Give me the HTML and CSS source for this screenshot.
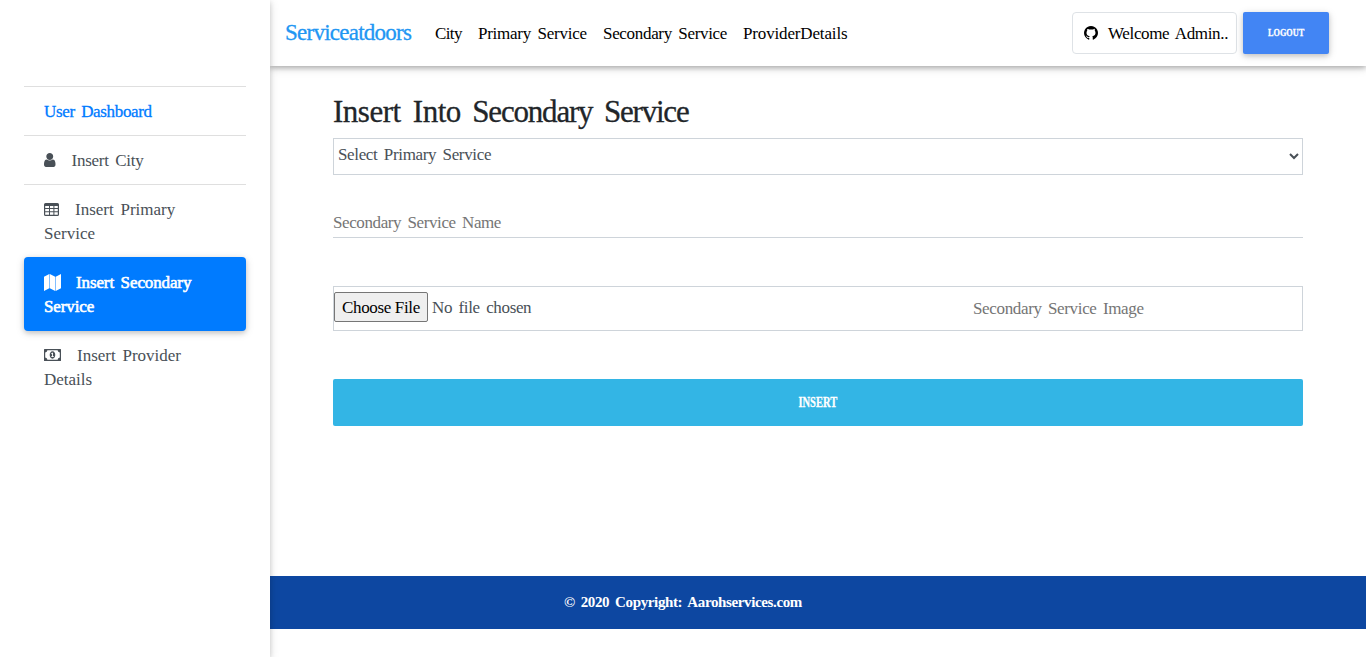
FILE: index.html
```html
<!DOCTYPE html>
<html lang="en">
<head>
<meta charset="utf-8">
<title>Insert Secondary Service</title>
<link rel="stylesheet" href="styles.css">
</head>
<body>
<div class="layout">
  <aside class="sidebar">
    <nav class="menu">
      <a class="item item-title">User Dashboard</a>
      <a class="item item-city"><svg class="icon icon-user" viewBox="256 128 1280 1536"><path d="M1536 1399q0 109-62.5 187t-150.5 78h-854q-88 0-150.5-78t-62.5-187q0-85 8.5-160.5t31.5-152 58.5-131 94-89 134.5-34.5q131 128 313 128t313-128q76 0 134.5 34.5t94 89 58.5 131 31.5 152 8.5 160.5zm-256-887q0 159-112.5 271.5t-271.5 112.5-271.5-112.5-112.5-271.5 112.5-271.5 271.5-112.5 271.5 112.5 112.5 271.5z"/></svg>Insert City</a>
      <a class="item item-primary"><svg class="icon icon-table" viewBox="0 0 15 13"><path fill-rule="evenodd" d="M1.500 0h12A1.500 1.500 0 0 1 15 1.500v10a1.500 1.500 0 0 1-1.500 1.500h-12A1.500 1.500 0 0 1 0 11.500v-10A1.500 1.500 0 0 1 1.500 0zM1.200 3v2H5V3zM6 3v2h3.400V3zM10.400 3v2h3.400V3zM1.200 6v2.200H5V6zM6 6v2.200h3.400V6zM10.400 6v2.200h3.400V6zM1.200 9.200v2.600H5V9.200zM6 9.200v2.600h3.400V9.200zM10.400 9.200v2.600h3.400V9.200z"/></svg>Insert Primary Service</a>
      <a class="item item-active"><svg class="icon icon-map" viewBox="0 0 17.6 16" preserveAspectRatio="none"><path d="M0 2.500 5.500 0v13.500L0 16zM6 0l5.600 2.500V16L6 13.500zM12.100 2.500 17.600 0v13.500L12.100 16z"/></svg>Insert Secondary Service</a>
      <a class="item item-provider"><svg class="icon icon-money" viewBox="0 0 17 12"><path fill-rule="evenodd" d="M.6 0h15.800q.6 0 .6.6v10.800q0 .6-.6.6H.6q-.6 0-.6-.6V.6Q0 0 .6 0zM3.400 1.200Q3.200 3.200 1.200 3.400v5.200Q3.200 8.800 3.400 10.800h10.200q.2-2 2.200-2.200V3.400q-2-.2-2.200-2.200z"/><path fill-rule="evenodd" d="M8.500 2.300c3.700 0 3.700 7.400 0 7.400s-3.700-7.400 0-7.400zM7.100 4.500l.6.700.4-.3v2.300h-.9v.9h2.700v-.9H9V3.700h-.8z"/></svg>Insert Provider Details</a>
    </nav>
  </aside>
  <div class="main">
    <header class="navbar">
      <a class="brand">Serviceatdoors</a>
      <nav class="links"><a class="link-city">City</a><a class="link-primary">Primary Service</a><a class="link-secondary">Secondary Service</a><a class="link-provider">ProviderDetails</a></nav>
      <div class="account">
        <a class="welcome"><svg class="icon-github" viewBox="128 128 1536 1536"><path d="M896 128q209 0 385.500 103t279.500 279.500 103 385.500q0 251-146.500 451.500t-378.500 277.500q-27 5-40-7t-13-30q0-3 .5-76.500t.5-134.500q0-97-52-142 57-6 102.500-18t94-39 81-66.500 53-105 20.500-150.500q0-119-79-206 37-91-8-204-28-9-81 11t-92 44l-38 24q-93-26-192-26t-192 26q-16-11-42.500-27t-83.500-38.500-85-13.500q-45 113-8 204-79 87-79 206 0 85 20.500 150t52.500 105 80.500 67 94 39 102.500 18q-39 36-49 103-21 10-45 15t-57 5-65.500-21.500-55.500-62.500q-19-32-48.500-52t-49.500-24l-20-3q-21 0-29 4.500t-5 11.500 9 14 13 12l7 5q22 10 43.500 38t31.500 51l10 23q13 38 44 61.500t67 30 69.500 7 55.500-3.500l23-4q0 38 .5 88.500t.5 54.500q0 18-13 30t-40 7q-232-77-378.500-277.500t-146.500-451.500q0-209 103-385.500t279.500-279.500 385.500-103z"/></svg>Welcome Admin..</a>
        <button class="logout"><span>LOGOUT</span></button>
      </div>
    </header>
    <form class="form">
      <h2><span class="lead">Insert Into</span> Secondary Service</h2>
      <select class="primary"><option>Select Primary Service</option></select>
      <input class="name" type="text" placeholder="Secondary Service Name">
      <div class="upload"><input type="file"><label>Secondary Service Image</label></div>
      <button class="submit" type="button"><span>INSERT</span></button>
    </form>
    <footer class="footer">© 2020 Copyright: Aarohservices.com</footer>
  </div>
</div>
</body>
</html>
```
FILE: styles.css
```css
* { box-sizing: border-box; }
body { margin: 0; height: 657px; overflow: hidden; background: #fff; }
body, input, select, button {
  font-family: "Liberation Serif", "Times New Roman", serif;
  font-size: 17px;
  line-height: 24px;
  letter-spacing: -0.35px;
  word-spacing: 2.5px;
}
.layout { display: flex; height: 657px; }

.sidebar {
  flex: 0 0 270px;
  padding: 86px 24px 0;
  background: #fff;
  box-shadow: 0 2px 5px rgba(0,0,0,.16), 0 2px 10px rgba(0,0,0,.12);
  z-index: 2;
}
.menu { display: flex; flex-direction: column; }
.item {
  padding: 13px 20px 11px;
  color: #495057;
  border-bottom: 1px solid #dfdfdf;
}
.item-title { color: #007bff; border-top: 1px solid #dfdfdf; letter-spacing: -.34px; -webkit-text-stroke: .3px #007bff; }
.item-city { letter-spacing: -.25px; }
.item-primary { border-bottom: 0; padding-right: 50px; letter-spacing: 0; }
.item-active {
  padding: 14px 20px 12px;
  color: #fff;
  background: #007bff;
  border-radius: 4px;
  border: 0;
  box-shadow: 0 2px 5px rgba(0,0,0,.16), 0 2px 10px rgba(0,0,0,.12);
  letter-spacing: -.12px;
  -webkit-text-stroke: .6px #fff;
}
.item-provider { border: 0; letter-spacing: 0; }
.icon { fill: currentColor; stroke: none; margin-right: 16px; }
.icon-user { width: 11.5px; height: 14px; vertical-align: -1px; }
.icon-table { width: 15px; height: 13px; vertical-align: -1px; }
.icon-map { width: 17px; height: 17px; margin-right: 15px; vertical-align: -3px; }
.icon-money { width: 17px; height: 12px; vertical-align: 0; }

.main { flex: 1; display: flex; flex-direction: column; min-width: 0; }
.navbar {
  height: 66px;
  flex: none;
  display: flex;
  align-items: center;
  padding: 0 37px 0 15px;
  color: #000;
  box-shadow: 0 2px 5px rgba(0,0,0,.26), 0 2px 10px rgba(0,0,0,.12);
}
.brand { width: 150px; color: #2196f3; font-size: 23px; letter-spacing: -.75px; -webkit-text-stroke: .3px #2196f3; }
.links { display: flex; gap: 16px; padding-top: 1px; white-space: nowrap; }
.link-city { width: 27px; letter-spacing: -.6px; }
.link-primary { width: 109px; letter-spacing: -.25px; }
.link-secondary { width: 124px; letter-spacing: -.32px; }
.link-provider { letter-spacing: -.15px; }
.account { display: flex; gap: 6px; margin-left: auto; }
.welcome {
  width: 165px;
  height: 42px;
  display: flex;
  align-items: center;
  gap: 10px;
  padding: 1px 0 0 11px;
  border: 1px solid #dee2e6;
  border-radius: 4px;
  white-space: nowrap;
}
.icon-github { width: 14px; height: 14px; margin-top: -2px; }
.logout {
  width: 86px;
  height: 42px;
  padding: 0 0 2px;
  border: 0;
  border-radius: 2px;
  background: #4285f4;
  color: #fff;
  font-size: 11px;
  font-weight: bold;
  letter-spacing: 0;
  box-shadow: 0 2px 5px rgba(0,0,0,.16), 0 2px 10px rgba(0,0,0,.12);
}
.logout span, .submit span { display: inline-block; transform: scaleX(.75); -webkit-text-stroke: .3px #fff; }

.form { height: 510px; display: flex; flex-direction: column; padding: 27px 63px 0; }
h2 {
  margin: 0 0 7px;
  font-size: 31px;
  line-height: 38px;
  font-weight: 400;
  letter-spacing: -1.2px;
  word-spacing: 5px;
  color: #212529;
  -webkit-text-stroke: .3px #212529;
}
.lead { letter-spacing: -.5px; }
.primary {
  height: 37px;
  padding: 0 1px 4px 0;
  border: 1px solid #ced4da;
  border-radius: 0;
  background: #fff;
  color: #495057;
}
.name {
  height: 32px;
  margin-top: 31px;
  padding: 2px 0 0;
  border: 0;
  border-bottom: 1px solid #ced4da;
  color: #495057;
  letter-spacing: -.4px;
}
.name::placeholder { color: #757575; }
.upload {
  height: 45px;
  margin-top: 48px;
  display: flex;
  align-items: center;
  border: 1px solid #ced4da;
  color: #757575;
}
.upload input { width: 639px; height: 30px; margin-top: -3px; color: #495057; }
.upload input::file-selector-button {
  width: 94px;
  height: 30px;
  padding: 2px 0 0;
  margin-right: 4px;
  border: 1px solid #767676;
  border-radius: 2px;
  background: #efefef;
  color: #000;
  font: inherit;
  letter-spacing: inherit;
}
.submit {
  height: 47px;
  margin-top: 48px;
  border: 0;
  border-radius: 2px;
  background: #33b5e5;
  color: #fff;
  font-size: 14px;
  font-weight: bold;
  letter-spacing: 0;
}
.footer {
  height: 53px;
  padding: 14px 0 0 294px;
  background: #0d47a1;
  color: #fff;
  font-size: 15px;
  font-weight: bold;
  letter-spacing: -.37px;
}
```
